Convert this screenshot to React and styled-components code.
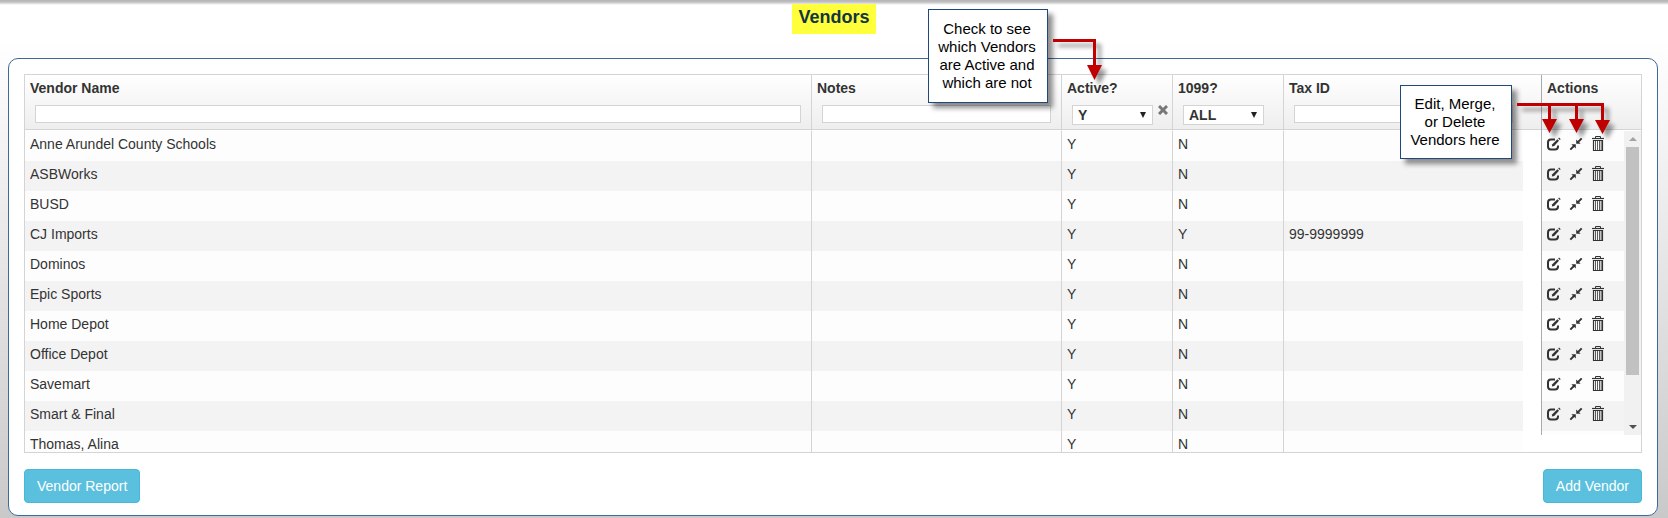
import { useState } from "react";
import styled, { createGlobalStyle } from "styled-components";

const vendors = [
    { name: "Anne Arundel County Schools", active: "Y", form1099: "N", taxId: "" },
    { name: "ASBWorks", active: "Y", form1099: "N", taxId: "" },
    { name: "BUSD", active: "Y", form1099: "N", taxId: "" },
    { name: "CJ Imports", active: "Y", form1099: "Y", taxId: "99-9999999" },
    { name: "Dominos", active: "Y", form1099: "N", taxId: "" },
    { name: "Epic Sports", active: "Y", form1099: "N", taxId: "" },
    { name: "Home Depot", active: "Y", form1099: "N", taxId: "" },
    { name: "Office Depot", active: "Y", form1099: "N", taxId: "" },
    { name: "Savemart", active: "Y", form1099: "N", taxId: "" },
    { name: "Smart & Final", active: "Y", form1099: "N", taxId: "" },
    { name: "Thomas, Alina", active: "Y", form1099: "N", taxId: "" },
];

const EditIcon = () => (
    <svg width="14" height="14" viewBox="0 0 14 14" fill="none">
        <path d="M8 2.500H4Q1 2.500 1 5.500V9.500Q1 12.500 4 12.500H8Q11 12.500 11 9.500V8.500" stroke="#333" strokeWidth="2" />
        <path d="M4.800 9.600L5.300 7.200L10.400 2.200L12 3.800L7.200 8.900Z" fill="#333" />
        <path d="M11.200 1.500L12.100 .6L13.700 2.200L12.800 3.100Z" fill="#333" />
    </svg>
);

const MergeIcon = () => (
    <svg width="14" height="14" viewBox="0 0 14 14" fill="#333">
        <path d="M7.200 6.800V2.400L8.700 3.900L12 .7L13.400 2.100L10.200 5.300L11.600 6.800Z" />
        <path d="M6.800 7.200V11.600L5.300 10.100L2 13.300L.6 11.900L3.800 8.700L2.400 7.200Z" />
    </svg>
);

const TrashIcon = () => (
    <svg width="14" height="16" viewBox="0 0 14 16" fill="none" stroke="#333">
        <path d="M4.500 2.500V.5H9.500V2.500" />
        <path d="M1 2.500H13" strokeWidth="1.200" />
        <path d="M2.500 4V14.500H11.500V4" strokeWidth="1.200" />
        <path d="M2 4.500H12" />
        <path d="M4.500 5V14M6.500 5V14M8.500 5V14M10.200 5V14" strokeWidth=".8" />
    </svg>
);

const ActiveArrow = () => (
    <svg width="60" height="56" viewBox="0 0 60 56">
        <path d="M1 8.500H42.500V34" fill="none" stroke="#c00000" strokeWidth="3" />
        <path d="M35 33H50L42.500 48Z" fill="#c00000" />
    </svg>
);

const ActionsArrow = () => (
    <svg width="104" height="46" viewBox="0 0 104 46">
        <path d="M1 8.500H86.500V26M33.500 8.500V26M60.500 8.500V26" fill="none" stroke="#c00000" strokeWidth="3" />
        <path d="M26 23H41L33.500 37Z M53 23H68L60.500 37Z M79 24H94L86.500 38Z" fill="#c00000" />
    </svg>
);

const YesNoFilter = ({ label, value, onChange }) => (
    <SelectWrap>
        <FilterSelect aria-label={label} value={value} onChange={(e) => onChange(e.target.value)}>
            <option value="ALL">ALL</option>
            <option value="Y">Y</option>
            <option value="N">N</option>
        </FilterSelect>
        <SelectArrow viewBox="0 0 6 6"><path d="M0 0H6L3 6Z" fill="#222" /></SelectArrow>
    </SelectWrap>
);

const App = () => {
    const [active, setActive] = useState("Y");
    const [form1099, setForm1099] = useState("ALL");

    return (
        <Page>
            <GlobalStyle />
            <TitleBar><Title>Vendors</Title></TitleBar>

            <Panel>
                <Grid>
                    <MainTable>
                        <colgroup>
                            <Col />
                            <Col $width={250} />
                            <Col $width={111} />
                            <Col $width={111} />
                            <Col $width={239} />
                            <Col $width={18} />
                        </colgroup>
                        <thead>
                            <tr>
                                <HeadCell><HeadLabel>Vendor Name</HeadLabel><FilterInput aria-label="Filter vendor name" /></HeadCell>
                                <HeadCell><HeadLabel>Notes</HeadLabel><FilterInput aria-label="Filter notes" /></HeadCell>
                                <HeadCell>
                                    <HeadLabel>Active?</HeadLabel>
                                    <FilterRow>
                                        <YesNoFilter label="Filter active" value={active} onChange={setActive} />
                                        <ClearButton aria-label="Clear active filter" onClick={() => setActive("ALL")}>
                                            <svg width="10" height="10" viewBox="0 0 10 10">
                                                <path d="M1 1L9 9M9 1L1 9" stroke="#777" strokeWidth="3" />
                                            </svg>
                                        </ClearButton>
                                    </FilterRow>
                                </HeadCell>
                                <HeadCell>
                                    <HeadLabel>1099?</HeadLabel>
                                    <FilterRow>
                                        <YesNoFilter label="Filter 1099" value={form1099} onChange={setForm1099} />
                                    </FilterRow>
                                </HeadCell>
                                <HeadCell $last><HeadLabel>Tax ID</HeadLabel><FilterInput aria-label="Filter tax ID" /></HeadCell>
                                <HeadCell as="td" $last />
                            </tr>
                        </thead>
                        <tbody>
                            {vendors.map((vendor) => (
                                <Row key={vendor.name}>
                                    <Cell>{vendor.name}</Cell>
                                    <Cell />
                                    <Cell>{vendor.active}</Cell>
                                    <Cell>{vendor.form1099}</Cell>
                                    <Cell $last>{vendor.taxId}</Cell>
                                    <Spacer />
                                </Row>
                            ))}
                        </tbody>
                    </MainTable>

                    <Pinned>
                        <PinnedHead>Actions</PinnedHead>
                        <PinnedBody>
                            <ActionList>
                                {vendors.map((vendor) => (
                                    <ActionRow key={vendor.name}>
                                        <IconButton aria-label={`Edit ${vendor.name}`}><EditIcon /></IconButton>
                                        <IconButton aria-label={`Merge ${vendor.name}`}><MergeIcon /></IconButton>
                                        <IconButton aria-label={`Delete ${vendor.name}`}><TrashIcon /></IconButton>
                                    </ActionRow>
                                ))}
                            </ActionList>
                            <ScrollBar>
                                <ScrollStep aria-label="Scroll up">
                                    <svg width="8" height="4" viewBox="0 0 8 4"><path d="M0 4L4 0L8 4Z" fill="#a3a3a3" /></svg>
                                </ScrollStep>
                                <ScrollTrack><ScrollThumb /></ScrollTrack>
                                <ScrollStep aria-label="Scroll down">
                                    <svg width="8" height="4" viewBox="0 0 8 4"><path d="M0 0H8L4 4Z" fill="#505050" /></svg>
                                </ScrollStep>
                            </ScrollBar>
                        </PinnedBody>
                    </Pinned>
                </Grid>

                <Footer>
                    <Button>Vendor Report</Button>
                    <Button>Add Vendor</Button>
                </Footer>
            </Panel>

            {/* help notes laid over the grid, anchored to the fixed right-hand columns */}
            <Callout $top={9} $right={620} $width={120} $pad={10}>
                Check to see<br />which Vendors<br />are Active and<br />which are not
            </Callout>
            <Pointer $top={32} $right={556}><ActiveArrow /></Pointer>
            <Callout $top={85} $right={156} $width={112} $pad={9}>
                Edit, Merge,<br />or Delete<br />Vendors here
            </Callout>
            <Pointer $top={96} $right={48}><ActionsArrow /></Pointer>
        </Page>
    );
};

export default App;

const GlobalStyle = createGlobalStyle`
    * {
        box-sizing: border-box;
    }

    body {
        margin: 0;
        font-family: "Liberation Sans", Arial, sans-serif;
        font-size: 14px;
        line-height: 20px;
        color: #333;
    }

    button, input, select {
        font: inherit;
        color: inherit;
    }
`;

const Page = styled.div`
    position: relative;
    min-height: 100vh;
    background:
        linear-gradient(#b4b4b4, #c0c0c0 2px, #fff0 5px),
        linear-gradient(#fff 40px, #c9c9c9);
`;

const TitleBar = styled.header`
    display: flex;
    justify-content: center;
    padding: 4px 0 24px;
`;

const Title = styled.h1`
    margin: 0;
    padding: 3px 6px 7px;
    background: #ffff3c;
    font-size: 18px;
    line-height: 20px;
    color: #12353f;
`;

const Panel = styled.main`
    margin: 0 10px 0 8px;
    padding: 15px 15px 12px;
    border: 1px solid #3f6a98;
    border-radius: 10px;
    background: #fff;
`;

const Grid = styled.div`
    display: flex;
    align-items: flex-start;
    height: 379px;
    overflow: hidden;
    border: 1px solid #d4d4d4;
`;

const MainTable = styled.table`
    flex: 1;
    width: 0;
    table-layout: fixed;
    border-collapse: separate;
    border-spacing: 0;
`;

const Col = styled.col`
    width: ${({ $width }) => ($width ? `${$width}px` : "auto")};
`;

const HeadCell = styled.th`
    height: 55px;
    padding: 3px 10px 4px;
    vertical-align: top;
    text-align: left;
    background: linear-gradient(#fff, #eee);
    border-bottom: 1px solid #d4d4d4;
    border-right: ${({ $last }) => ($last ? "none" : "1px solid #d4d4d4")};
`;

const HeadLabel = styled.div`
    margin: 0 -5px 7px;
`;

const FilterInput = styled.input`
    display: block;
    width: 100%;
    height: 18px;
    padding: 0 4px;
    border: 1px solid #d4d4d4;
    background: #fff;
`;

const FilterRow = styled.div`
    display: flex;
    gap: 5px;
    height: 20px;
    margin-right: -10px;
`;

const SelectWrap = styled.div`
    display: grid;
    align-items: center;
    width: 81px;
`;

const FilterSelect = styled.select`
    grid-area: 1 / 1;
    appearance: none;
    height: 20px;
    padding: 0 5px;
    border: 1px solid #d4d4d4;
    border-radius: 0;
    background: #fff;
    line-height: 18px;
`;

const SelectArrow = styled.svg`
    grid-area: 1 / 1;
    justify-self: end;
    width: 6px;
    height: 6px;
    margin-right: 7px;
    pointer-events: none;
`;

const ClearButton = styled.button`
    display: flex;
    align-self: flex-start;
    padding: 0;
    border: none;
    background: none;
`;

const Row = styled.tr`
    background: #fdfdfd;

    &:nth-child(even) {
        background: #f3f3f3;
    }

    &:first-child > td {
        height: 31px;
        border-top: 1px solid #fff;
    }
`;

const Cell = styled.td`
    height: 30px;
    padding: 3px 5px 7px;
    border-right: ${({ $last }) => ($last ? "none" : "1px solid #d4d4d4")};
`;

const Spacer = styled.td`
    padding: 0;
    background: #fff;
`;

const Pinned = styled.div`
    width: 100px;
    border-left: 1px solid #aaa;
`;

const PinnedHead = styled.div`
    height: 55px;
    padding: 3px 5px;
    font-weight: bold;
    background: linear-gradient(#fff, #eee);
    border-bottom: 1px solid #d4d4d4;
`;

const PinnedBody = styled.div`
    display: flex;
    height: 305px;
    padding-top: 1px;
    overflow: hidden;
`;

const ActionList = styled.div`
    flex: 1;
`;

const ActionRow = styled.div`
    display: flex;
    gap: 8px;
    height: 30px;
    padding: 5px 5px 0;
    background: #fdfdfd;

    &:nth-child(even) {
        background: #f3f3f3;
    }
`;

const IconButton = styled.button`
    display: flex;
    align-items: center;
    height: 16px;
    padding: 0;
    border: none;
    background: none;
`;

const ScrollBar = styled.div`
    display: flex;
    flex-direction: column;
    width: 17px;
    background: #f1f1f1;
`;

const ScrollStep = styled.button`
    display: flex;
    align-items: center;
    justify-content: center;
    height: 16px;
    padding: 0;
    border: none;
    background: none;
`;

const ScrollTrack = styled.div`
    flex: 1;
    padding: 0 2px;
`;

const ScrollThumb = styled.div`
    height: 84%;
    background: #c1c1c1;
`;

const Footer = styled.div`
    display: flex;
    justify-content: space-between;
    margin-top: 16px;
`;

const Button = styled.button`
    height: 34px;
    padding: 0 12px;
    border: 1px solid #46b8da;
    border-radius: 4px;
    background: #5bc0de;
    color: #fff;
`;

const Callout = styled.div`
    position: absolute;
    top: ${({ $top }) => $top}px;
    right: ${({ $right }) => $right}px;
    width: ${({ $width }) => $width}px;
    padding: ${({ $pad }) => $pad}px 2px ${({ $pad }) => $pad}px 0;
    border: 1px solid #1f497d;
    background: #fff;
    box-shadow: 5px 5px 5px #00000070;
    font-size: 15px;
    line-height: 18px;
    text-align: center;
    color: #000;
`;

const Pointer = styled.div`
    position: absolute;
    top: ${({ $top }) => $top}px;
    right: ${({ $right }) => $right}px;
    pointer-events: none;

    svg {
        display: block;
        overflow: visible;
        filter: drop-shadow(5px 5px 2px #00000066);
    }
`;
